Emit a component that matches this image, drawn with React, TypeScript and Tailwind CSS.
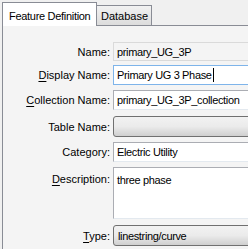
import React from 'react';

const font = "font-['Liberation_Sans',Arial,sans-serif]";

const Label: React.FC<{ text: string; mnemonic?: boolean; top?: boolean }> = ({ text, mnemonic, top }) => (
  <div className={`w-[108px] shrink-0 pr-[1px] text-right whitespace-nowrap ${top ? 'self-start pt-[5px]' : ''}`}>
    {mnemonic ? (
      <>
        <span className="underline underline-offset-[2px]">{text[0]}</span>
        {text.slice(1)}:
      </>
    ) : (
      `${text}:`
    )}
  </div>
);

const App: React.FC = () => {
  return (
    <div className={`w-[248px] h-[249px] overflow-hidden bg-[#f0f0f0] text-[11px] leading-[14px] text-black whitespace-nowrap ${font}`}>
      {/* tab strip */}
      <div className="flex items-end h-[25px] pl-[2px]">
        <div className="relative z-10 h-[24px] w-[95px] border border-b-0 border-[#898c95] bg-white pl-[6px] pt-[6px] mb-[-1px] tracking-[-0.3px]">
          Feature Definition
        </div>
        <div className="h-[20px] w-[55px] border border-l-0 border-b-0 border-[#898c95] bg-gradient-to-b from-[#f2f2f2] to-[#dcdcdc] pl-[4px] pt-[3px]">
          Database
        </div>
      </div>

      {/* panel */}
      <div className="w-[262px] h-[230px] ml-[2px] border border-[#898c95] bg-[#f4f4f4] pt-[16px]">
        <div className="flex flex-col">
          <div className="flex items-center gap-[2px] h-[19px]">
            <Label text="Name" />
            <div className="flex-1 h-full border border-[#dadada] bg-[#f4f4f4] pl-[3px] flex items-center tracking-[-0.35px]">primary_UG_3P</div>
          </div>

          <div className="flex items-center gap-[2px] h-[20px] mt-[4px]">
            <Label text="Display Name" mnemonic />
            <div className="flex-1 h-full border border-[#7eb4ea] bg-white pl-[3px] flex items-center tracking-[-0.35px]">
              Primary UG 3 Phase<span className="ml-[1px] inline-block w-[1px] h-[14px] bg-black" />
            </div>
          </div>

          <div className="flex items-center gap-[2px] h-[20px] mt-[5px]">
            <Label text="Collection Name" mnemonic />
            <div className="flex-1 h-full border border-[#abadb3] border-b-[#e3e9ef] border-r-[#dbdfe6] bg-white pl-[3px] flex items-center tracking-[-0.35px]">
              primary_UG_3P_collection
            </div>
          </div>

          <div className="flex items-center gap-[2px] h-[21px] mt-[6px]">
            <Label text="Table Name" />
            <div className="flex-1 h-full rounded-[3px] border border-[#707070] bg-gradient-to-b from-[#f2f2f2] via-[#ebebeb] to-[#cfcfcf]" />
          </div>

          <div className="flex items-center gap-[2px] h-[20px] mt-[5px]">
            <Label text="Category" />
            <div className="flex-1 h-full border border-[#abadb3] border-b-[#e3e9ef] bg-white pl-[3px] flex items-center tracking-[-0.35px]">
              Electric Utility
            </div>
          </div>

          <div className="flex gap-[2px] h-[52px] mt-[5px]">
            <Label text="Description" mnemonic top />
            <div className="flex-1 h-full border border-[#abadb3] border-b-[#e3e9ef] bg-white pl-[3px] pt-[5px] tracking-[-0.35px]">
              three phase
            </div>
          </div>

          <div className="flex items-center gap-[2px] h-[21px] mt-[6px]">
            <Label text="Type" mnemonic />
            <div className="flex-1 h-full rounded-[3px] border border-[#707070] bg-gradient-to-b from-[#f2f2f2] via-[#ebebeb] to-[#cfcfcf] pl-[4px] flex items-center tracking-[-0.35px]">
              linestring/curve
            </div>
          </div>
        </div>
      </div>
    </div>
  );
};

export default App;
